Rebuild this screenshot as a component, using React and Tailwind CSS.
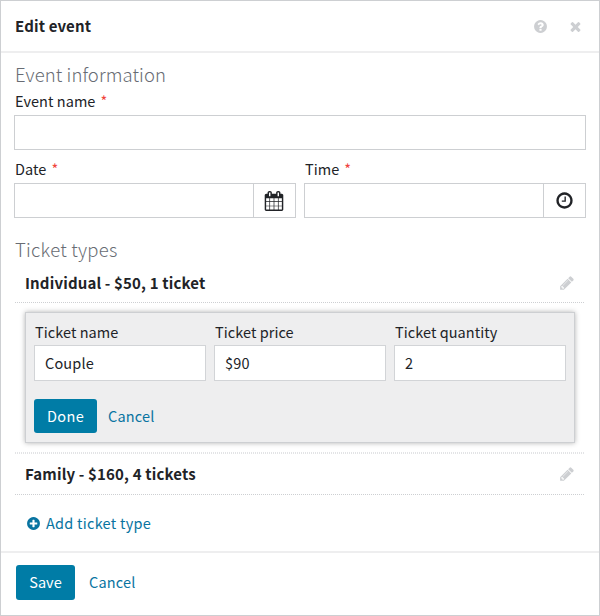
const icons = {
  question:
    'M1024 1376v-192q0-14-9-23t-23-9h-192q-14 0-23 9t-9 23v192q0 14 9 23t23 9h192q14 0 23-9t9-23zm256-672q0-88-55.5-163t-138.5-116-170-41q-243 0-371 213-15 24 8 42l132 100q7 6 19 6 16 0 25-12 53-68 86-92 34-24 86-24 48 0 85.5 26t37.5 59q0 38-20 61t-68 45q-63 28-115.5 86.5t-52.5 125.5v36q0 14 9 23t23 9h192q14 0 23-9t9-23q0-19 21.5-49.5t54.5-49.5q32-18 49-28.5t46-35 44.5-48 28-60.5 12.5-81zm384 192q0 209-103 385.5t-279.5 279.5-385.5 103-385.5-103-279.5-279.5-103-385.5 103-385.5 279.5-279.5 385.5-103 385.5 103 279.5 279.5 103 385.5z',
  times:
    'M1490 1322q0 40-28 68l-136 136q-28 28-68 28t-68-28l-294-294-294 294q-28 28-68 28t-68-28l-136-136q-28-28-28-68t28-68l294-294-294-294q-28-28-28-68t28-68l136-136q28-28 68-28t68 28l294 294 294-294q28-28 68-28t68 28l136 136q28 28 28 68t-28 68l-294 294 294 294q28 28 28 68z',
  calendar:
    'M192 1664h288v-288h-288v288zm352 0h320v-288h-320v288zm-352-352h288v-320h-288v320zm352 0h320v-320h-320v320zm-352-384h288v-288h-288v288zm736 736h320v-288h-320v288zm-384-736h320v-288h-320v288zm768 736h288v-288h-288v288zm-384-352h320v-320h-320v320zm-352-864v-288q0-13-9.5-22.5t-22.5-9.5h-64q-13 0-22.5 9.5t-9.5 22.5v288q0 13 9.5 22.5t22.5 9.5h64q13 0 22.5-9.5t9.5-22.5zm736 864h288v-320h-288v320zm-384-384h320v-288h-320v288zm384 0h288v-288h-288v288zm32-480v-288q0-13-9.5-22.5t-22.5-9.5h-64q-13 0-22.5 9.5t-9.5 22.5v288q0 13 9.5 22.5t22.5 9.5h64q13 0 22.5-9.5t9.5-22.5zm384-64v1280q0 52-38 90t-90 38h-1408q-52 0-90-38t-38-90v-1280q0-52 38-90t90-38h128v-96q0-66 47-113t113-47h64q66 0 113 47t47 113v96h384v-96q0-66 47-113t113-47h64q66 0 113 47t47 113v96h128q52 0 90 38t38 90z',
  clock:
    'M1024 544v448q0 14-9 23t-23 9h-320q-14 0-23-9t-9-23v-64q0-14 9-23t23-9h224v-352q0-14 9-23t23-9h64q14 0 23 9t9 23zm416 352q0-148-73-273t-198-198-273-73-273 73-198 198-73 273 73 273 198 198 273 73 273-73 198-198 73-273zm224 0q0 209-103 385.5t-279.5 279.5-385.5 103-385.5-103-279.5-279.5-103-385.5 103-385.5 279.5-279.5 385.5-103 385.5 103 279.5 279.5 103 385.5z',
  pencil:
    'M491 1536l91-91-235-235-91 91v107h128v128h107zm523-928q0-22-22-22-10 0-17 7l-542 542q-7 7-7 17 0 22 22 22 10 0 17-7l542-542q7-7 7-17zm-54-192l416 416-832 832h-416v-416zm683 96q0 53-37 90l-166 166-416-416 166-165q36-38 90-38 53 0 91 38l235 234q37 39 37 91z',
  plus:
    'M1344 960v-128q0-26-19-45t-45-19h-256v-256q0-26-19-45t-45-19h-128q-26 0-45 19t-19 45v256h-256q-26 0-45 19t-19 45v128q0 26 19 45t45 19h256v256q0 26 19 45t45 19h128q26 0 45-19t19-45v-256h256q26 0 45-19t19-45zm320-64q0 209-103 385.5t-279.5 279.5-385.5 103-385.5-103-279.5-279.5-103-385.5 103-385.5 279.5-279.5 385.5-103 385.5 103 279.5 279.5 103 385.5z',
}

function Icon({ name, className }) {
  return (
    <svg viewBox="0 0 1792 1792" fill="currentColor" className={className} aria-hidden="true">
      <path d={icons[name]} />
    </svg>
  )
}

function Label({ children, required }) {
  return (
    <div className="ml-px flex h-5 items-center pb-0.5 leading-5">
      {children}
      {required && <span className="ml-[5px] text-[#f0443e]">*</span>}
    </div>
  )
}

function PickerField({ label, icon, iconClass }) {
  return (
    <div className="w-[282px]">
      <Label required>{label}</Label>
      <div className="mt-[3px] flex h-[35px] border border-[#cdcfd2]">
        <div className="flex-1" />
        <div className="flex w-[42px] items-center justify-center border-l border-[#cdcfd2] pr-px">
          <Icon name={icon} className={iconClass} />
        </div>
      </div>
    </div>
  )
}

function TicketField({ label, value }) {
  return (
    <div className="w-[172px]">
      <Label>{label}</Label>
      <div className="mt-0.5 flex h-9 items-center border border-[#d2d4d7] bg-white pb-px pl-2.5 tracking-[0.15px]">
        {value}
      </div>
    </div>
  )
}

function TicketRow({ children }) {
  return (
    <div className="mx-px flex h-10 shrink-0 items-center justify-between pr-2.5 pl-2.5 text-[15px] font-bold tracking-[0.15px]">
      <span>{children}</span>
      <Icon name="pencil" className="size-4 text-[#cdcfd2]" />
    </div>
  )
}

export default function App() {
  return (
    <div className="flex h-[616px] w-[600px] flex-col border border-[#cdcfd2] bg-white font-['Noto_Sans_CJK_SC','Noto_Sans',sans-serif] text-[14.5px] tracking-[0.05px] whitespace-nowrap text-[#212327]">
      <header className="flex h-[52px] items-center justify-between border-b-2 border-[#eeeeef] pr-4 pl-3.5">
        <h1 className="text-[15px] font-bold tracking-[0.13px]">Edit event</h1>
        <div className="flex gap-5 text-[#cdcfd2]">
          <Icon name="question" className="size-[15px]" />
          <Icon name="times" className="size-[15px]" />
        </div>
      </header>

      <main className="flex h-[498px] shrink-0 flex-col px-[13px]">
        <h2 className="mt-[7px] ml-px h-7 shrink-0 text-[18.5px] leading-7 font-light tracking-[0.1px] text-[#686c73]">
          Event information
        </h2>
        <div className="mt-1">
          <Label required>Event name</Label>
          <div className="mt-[3px] h-[35px] border border-[#cdcfd2]" />
        </div>
        <div className="mt-2.5 flex gap-2">
          <PickerField label="Date" icon="calendar" iconClass="size-5" />
          <PickerField label="Time" icon="clock" iconClass="size-[19px]" />
        </div>

        <h2 className="mt-[17px] ml-px h-7 shrink-0 text-[18.5px] leading-7 font-light tracking-[0.25px] text-[#686c73]">
          Ticket types
        </h2>
        <div className="-mb-px">
          <TicketRow>Individual - $50, 1 ticket</TicketRow>
        </div>
        <div className="mx-px h-px shrink-0 bg-[repeating-linear-gradient(90deg,#cdcfd2_0_1px,transparent_1px_2px)]" />
        <section className="mx-[11px] mt-[9px] h-[131px] shrink-0 border border-[#cdcfd2] bg-[#eeeeef] px-2 pt-2.5 shadow-[0_0_5px_rgba(0,0,0,0.3)]">
          <div className="flex gap-2">
            <TicketField label="Ticket name" value="Couple" />
            <TicketField label="Ticket price" value="$90" />
            <TicketField label="Ticket quantity" value="2" />
          </div>
          <div className="mt-[18px] flex items-center">
            <button className="h-[34px] w-[63px] rounded-[3px] bg-[#007ca6] tracking-[0.35px] text-white">Done</button>
            <button className="ml-[11px] tracking-[0.2px] text-[#0974a1]">Cancel</button>
          </div>
        </section>
        <div className="mx-px mt-[9px] h-0.5 shrink-0 bg-[repeating-linear-gradient(90deg,#e3e4e6_0_1px,transparent_1px_2px)]" />
        <TicketRow>Family - $160, 4 tickets</TicketRow>
        <div className="mx-px h-px shrink-0 bg-[repeating-linear-gradient(90deg,#cdcfd2_0_1px,transparent_1px_2px)]" />
        <button className="mt-4 ml-3 flex h-6 items-center gap-[5px] tracking-[0.25px] text-[#0974a1]">
          <Icon name="plus" className="size-[15px]" />
          Add ticket type
        </button>
      </main>

      <footer className="flex flex-1 items-center border-t-2 border-[#eeeeef] pb-[3px] pl-[15px]">
        <button className="h-[35px] w-[59px] rounded-[3px] bg-[#007ca6] pb-0.5 text-white">Save</button>
        <button className="ml-3.5 pb-0.5 tracking-[0.2px] text-[#0974a1]">Cancel</button>
      </footer>
    </div>
  )
}
